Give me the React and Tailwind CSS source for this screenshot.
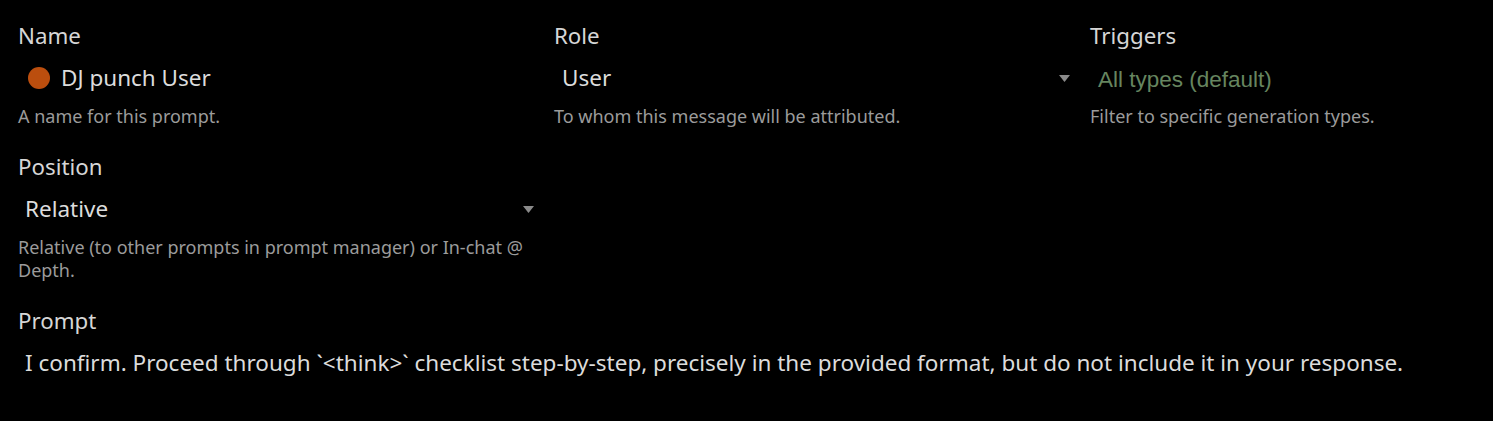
import React from 'react';

const font = { fontFamily: '"Noto Sans", "Open Sans", sans-serif' };

function Caret() {
  return (
    <svg width="11" height="7" viewBox="0 0 11 7" className="shrink-0">
      <path d="M0 0 H11 L5.5 7 Z" fill="#8a8a8a" />
    </svg>
  );
}

function Field({ label, children, desc }) {
  return (
    <div className="flex flex-col">
      <div className="h-[30px] leading-[30px] text-[22.3px] text-[#d6d6d6]">{label}</div>
      <div className="mt-[5px] h-[44px] flex items-center">{children}</div>
      <div className="mt-[5px] leading-[23px] text-[18px] text-[#9b9b9b]">{desc}</div>
    </div>
  );
}

export default function App() {
  return (
    <div className="min-h-screen bg-black overflow-hidden pl-[18px] pt-[21px]" style={font}>
      <div className="grid grid-cols-[518px_518px_518px] gap-x-[18px] gap-y-[24px]">
        <Field label="Name" desc="A name for this prompt.">
          <div className="flex items-center pl-[10px] gap-[11px]">
            <span className="w-[22px] h-[22px] rounded-full bg-[#bb4e0e]" />
            <span className="text-[22.5px] text-[#dcdcdc]">DJ punch User</span>
          </div>
        </Field>

        <Field label="Role" desc="To whom this message will be attributed.">
          <div className="flex w-full items-center justify-between pl-[8px] pr-[2px]">
            <span className="text-[22.5px] text-[#dcdcdc]">User</span>
            <Caret />
          </div>
        </Field>

        <Field label="Triggers" desc="Filter to specific generation types.">
          <div className="pl-[8px] pt-[4px]">
            <span
              className="text-[22.5px] text-[#66855f]"
              style={{ fontFamily: '"Liberation Sans", Arial, sans-serif' }}
            >
              All types (default)
            </span>
          </div>
        </Field>

        <Field
          label="Position"
          desc="Relative (to other prompts in prompt manager) or In-chat @ Depth."
        >
          <div className="flex w-full items-center justify-between pl-[7px] pr-[2px]">
            <span className="text-[22.5px] text-[#dcdcdc]">Relative</span>
            <Caret />
          </div>
        </Field>
      </div>

      <div className="mt-[24px] flex flex-col">
        <div className="h-[30px] leading-[30px] text-[22.3px] text-[#d6d6d6]">Prompt</div>
        <div className="mt-[5px] h-[44px] flex items-center pl-[7px] text-[22.5px] text-[#dcdcdc] whitespace-nowrap">
          I confirm. Proceed through `&lt;think&gt;` checklist step-by-step, precisely in the provided format, but do not include it in your response.
        </div>
      </div>
    </div>
  );
}
